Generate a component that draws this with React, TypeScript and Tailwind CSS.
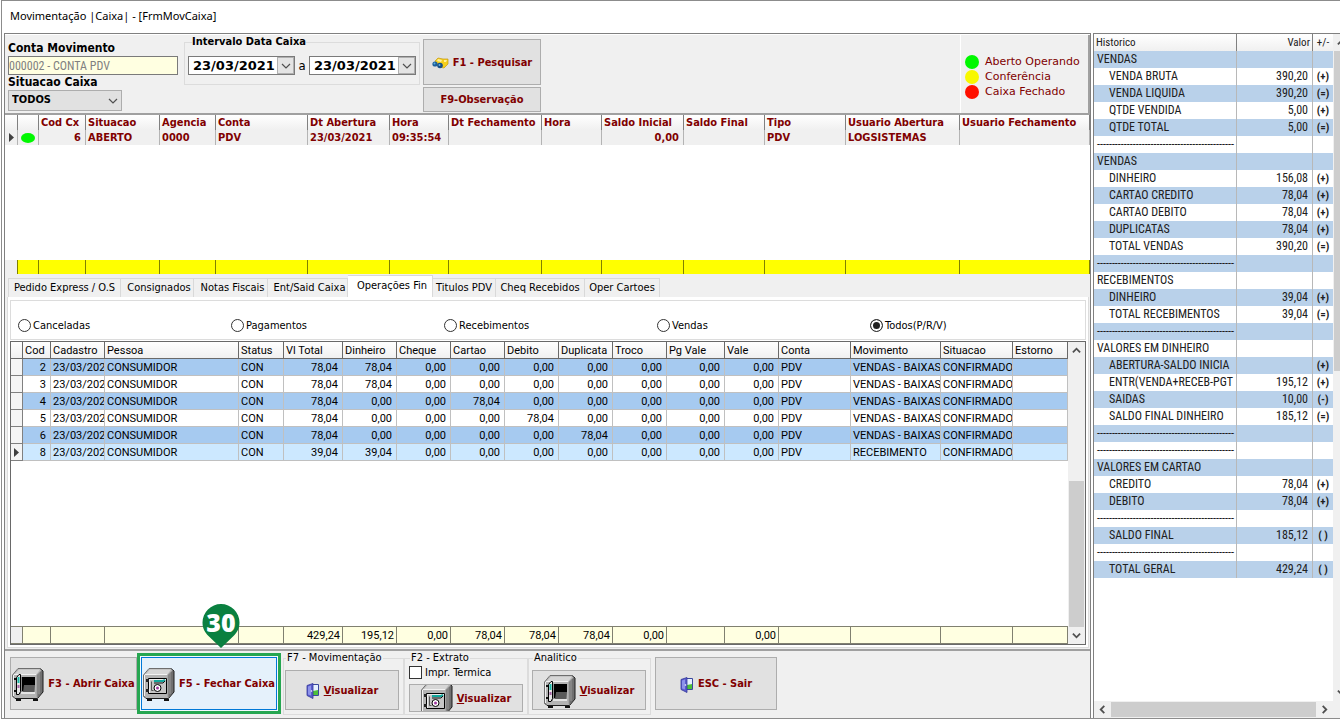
import { useState, type ReactNode } from 'react'

// ── Column widths (one column per grid is left free to stretch) ──
const CAIXA_COLS = [
  'w-[13px]', 'w-[21px]', 'w-[47px]', 'w-[74px]', 'w-[56px]', 'w-[92px]', 'w-[82px]', 'w-[59px]',
  'w-[93px]', 'w-[60px]', 'w-[82px]', 'w-[81px]', 'w-[81px]', 'w-[114px]', '',
]
const CAIXA_HEAD = [
  '', '', 'Cod Cx', 'Situacao', 'Agencia', 'Conta', 'Dt Abertura', 'Hora', 'Dt Fechamento', 'Hora',
  'Saldo Inicial', 'Saldo Final', 'Tipo', 'Usuario Abertura', 'Usuario Fechamento',
]
const CAIXA_ROW = [
  '6', 'ABERTO', '0000', 'PDV', '23/03/2021', '09:35:54', '', '', '0,00', '', 'PDV', 'LOGSISTEMAS', '',
]

const OPER_COLS = [
  'w-[12px]', 'w-[28px]', 'w-[54px]', '', 'w-[45px]', 'w-[59px]', 'w-[54px]', 'w-[54px]', 'w-[54px]',
  'w-[54px]', 'w-[54px]', 'w-[54px]', 'w-[58px]', 'w-[54px]', 'w-[72px]', 'w-[90px]', 'w-[72px]', 'w-[55px]',
]
const OPER_HEAD = [
  '', 'Cod', 'Cadastro', 'Pessoa', 'Status', 'Vl Total', 'Dinheiro', 'Cheque', 'Cartao', 'Debito',
  'Duplicata', 'Troco', 'Pg Vale', 'Vale', 'Conta', 'Movimento', 'Situacao', 'Estorno',
]

type Oper = { cod: string; total: string; valores: string[]; mov: string }
const OPERACOES: Oper[] = [
  { cod: '2', total: '78,04', valores: ['78,04', '0,00', '0,00', '0,00', '0,00'], mov: 'VENDAS - BAIXAS' },
  { cod: '3', total: '78,04', valores: ['78,04', '0,00', '0,00', '0,00', '0,00'], mov: 'VENDAS - BAIXAS' },
  { cod: '4', total: '78,04', valores: ['0,00', '0,00', '78,04', '0,00', '0,00'], mov: 'VENDAS - BAIXAS' },
  { cod: '5', total: '78,04', valores: ['0,00', '0,00', '0,00', '78,04', '0,00'], mov: 'VENDAS - BAIXAS' },
  { cod: '6', total: '78,04', valores: ['0,00', '0,00', '0,00', '0,00', '78,04'], mov: 'VENDAS - BAIXAS' },
  { cod: '8', total: '39,04', valores: ['39,04', '0,00', '0,00', '0,00', '0,00'], mov: 'RECEBIMENTO' },
]
const OPER_FOOT = [
  '', '', '', '', '', '429,24', '195,12', '0,00', '78,04', '78,04', '78,04', '0,00', '', '0,00', '', '', '', '',
]

const SEP = '-'.repeat(46)
// [historico, valor, sinal]
const HISTORICO: [string, string, string][] = [
  ['VENDAS', '', ''],
  ['VENDA BRUTA', '390,20', '(+)'],
  ['VENDA LIQUIDA', '390,20', '(=)'],
  ['QTDE VENDIDA', '5,00', '(+)'],
  ['QTDE TOTAL', '5,00', '(=)'],
  [SEP, '', ''],
  ['VENDAS', '', ''],
  ['DINHEIRO', '156,08', '(+)'],
  ['CARTAO CREDITO', '78,04', '(+)'],
  ['CARTAO DEBITO', '78,04', '(+)'],
  ['DUPLICATAS', '78,04', '(+)'],
  ['TOTAL VENDAS', '390,20', '(=)'],
  [SEP, '', ''],
  ['RECEBIMENTOS', '', ''],
  ['DINHEIRO', '39,04', '(+)'],
  ['TOTAL RECEBIMENTOS', '39,04', '(=)'],
  [SEP, '', ''],
  ['VALORES EM DINHEIRO', '', ''],
  ['ABERTURA-SALDO INICIA', '', '(+)'],
  ['ENTR(VENDA+RECEB-PGT', '195,12', '(+)'],
  ['SAIDAS', '10,00', '(-)'],
  ['SALDO FINAL DINHEIRO', '185,12', '(=)'],
  [SEP, '', ''],
  [SEP, '', ''],
  ['VALORES EM CARTAO', '', ''],
  ['CREDITO', '78,04', '(+)'],
  ['DEBITO', '78,04', '(+)'],
  [SEP, '', ''],
  ['SALDO FINAL', '185,12', '( )'],
  [SEP, '', ''],
  ['TOTAL GERAL', '429,24', '( )'],
]

const ABAS = [
  { nome: 'Pedido Express / O.S', cls: 'w-[113px]' },
  { nome: 'Consignados', cls: 'w-[73px] pl-1' },
  { nome: 'Notas Fiscais', cls: 'w-[74px] pl-1' },
  { nome: 'Ent/Said Caixa', cls: 'w-[80px] pl-1' },
  { nome: 'Operações Fin', cls: 'w-[85px] pl-1' },
  { nome: 'Titulos PDV', cls: 'w-[63px]' },
  { nome: 'Cheq Recebidos', cls: 'w-[89px]' },
  { nome: 'Oper Cartoes', cls: 'w-[75px]' },
]
const FILTROS = ['Canceladas', 'Pagamentos', 'Recebimentos', 'Vendas', 'Todos(P/R/V)']

// ── Icons ──
function Cofre({ aberto }: { aberto?: boolean }) {
  return (
    <svg width="32" height="33" viewBox="0 0 32 33" fill="none" aria-hidden="true" className="shrink-0">
      <path d="M1 7 6 1h22l3 2v21l-5 6H3l-2-2z" fill="#b4b4b4" />
      <path d="M2 7 7 1.500h21L24 7z" fill="#d6d6d6" />
      <path d="M25 7l5-5 1 2v20l-6 6z" fill="#707070" />
      <path d="M2 6.500h22M1.500 7v21" stroke="#f2f2f2" />
      <path d="M25 7v22M27 5v21" stroke="#9a9a9a" />
      <path d="M.5 28V7L6 .5h22" stroke="#6e6e6e" />
      <path d="M28 .5l3 2.500v21l-5.500 6.500H3L.5 28" stroke="#1c1c1c" />
      <path d="M4 31h5v2H4zM21 31h5v2h-5z" fill="#111" />
      {aberto ? (
        <>
          <path d="M8 9h15v17H8z" fill="#8c8c8c" />
          <path d="M12 9h11v8H12zM10 9h2v14h-2z" fill="#000" />
          <path d="M12 17h11l-1 7H11z" fill="#5a5a5a" />
          <path d="M9 24h14v2H9z" fill="#e4e4e4" />
          <path d="M4.500 9.500 7 6.500h1.500v17L7 26.500H4.500z" fill="#e6e6e6" stroke="#000" />
          <path d="M6.500 9v6" stroke="#19b8a6" strokeWidth="2" />
          <path d="M6.500 17v3" stroke="#a763a7" strokeWidth="2" />
          <path d="M2 10h2v2H2zM2 22h2v2H2z" fill="#111" />
        </>
      ) : (
        <>
          <path d="M5.500 10.500h18v15h-18z" fill="#c6c6c6" stroke="#000" />
          <path d="M6.500 25V11.500H23" stroke="#eee" />
          <path d="M8.500 13.500v9h2" stroke="#555" />
          <path d="M3 11h3v3H3zM3 21h3v3H3z" fill="#222" />
          <path d="M11 13h9l2-1" stroke="#12a79c" strokeWidth="2" />
          <path d="M11 15h9l2-2" stroke="#111" />
          <circle cx="14.500" cy="20" r="3.500" fill="#fff" stroke="#000" />
          <circle cx="14.500" cy="20" r="1.500" fill="#a03aa0" />
        </>
      )}
    </svg>
  )
}

function Porta() {
  return (
    <svg width="14" height="16" viewBox="0 0 14 16" aria-hidden="true" className="shrink-0">
      <path d="M6.500 1.500h6v11h-6z" fill="#e6f1ff" stroke="#3a479e" />
      <path d="M7 8l5-1v5H7z" fill="#4cc03a" />
      <path d="M1 2.500 7 .5v15l-6-3z" fill="#5a5ccc" stroke="#33379a" strokeWidth=".8" />
      <path d="M2 3.500l3-1v10l-3-1z" fill="#8d92ea" />
      <circle cx="5.500" cy="8" r=".8" fill="#fff" />
    </svg>
  )
}

function Binoculo() {
  return (
    <svg width="17" height="13" viewBox="0 0 17 13" aria-hidden="true" className="shrink-0">
      <path d="M3 4 6 1l5 1 5 0v5l-4 4-5-1z" fill="#f5cf1c" stroke="#c79a10" strokeWidth=".7" />
      <path d="M6 2l4 1-1 2-4-1zM12 3h3l-1 2h-2z" fill="#fff09a" />
      <circle cx="3" cy="7" r="2.600" fill="#1c5f9c" />
      <circle cx="8" cy="8.500" r="2.800" fill="#174f88" />
      <circle cx="2.500" cy="6.500" r="1" fill="#5fb0e0" />
      <circle cx="7.500" cy="8" r="1" fill="#5fb0e0" />
    </svg>
  )
}

function Seta({ d, size = 10 }: { d: string; size?: number }) {
  return (
    <svg width={size} height={size} viewBox="0 0 10 10" fill="none" aria-hidden="true" className="shrink-0">
      <path d={d} stroke="#505050" strokeWidth={size === 10 ? 1.2 : 2} />
    </svg>
  )
}
const CIMA = 'M1 7l4-4 4 4'
const BAIXO = 'M1 3l4 4 4-4'

function Marcador() {
  return (
    <svg width="5" height="9" viewBox="0 0 5 9" aria-hidden="true" className="mx-auto">
      <path d="M0 0l5 4.500L0 9z" fill="#404040" />
    </svg>
  )
}

// ── Shared pieces ──
function Cols({ cols }: { cols: string[] }) {
  return (
    <colgroup>
      {cols.map((c, i) => <col key={i} className={c} />)}
    </colgroup>
  )
}

function Botao({ className, children }: { className: string; children: ReactNode }) {
  return (
    <button
      type="button"
      className={`flex items-center justify-center overflow-hidden border border-[#adadad] bg-[#e1e1e1] pt-[2px] font-bold whitespace-nowrap text-[#800000] ${className}`}
    >
      {children}
    </button>
  )
}

function Data({ label }: { label: string }) {
  return (
    <div className="flex h-[19px] w-[107px] border border-[#7a7a7a] bg-white">
      <input
        aria-label={label}
        defaultValue="23/03/2021"
        className="w-[88px] pl-1 font-['DejaVu_Sans',sans-serif] text-[13px] font-bold outline-none"
      />
      <button type="button" aria-label={`Abrir ${label}`} className="flex w-[17px] items-center justify-center border border-[#b0b0b0] bg-[#e4e4e4]">
        <Seta d={BAIXO} />
      </button>
    </div>
  )
}

function Visualizar() {
  return <span><u>V</u>isualizar</span>
}

// ── Top: filters ──
function Filtros() {
  return (
    <section className="flex h-[81px] shrink-0 border-t border-b-2 border-t-white border-b-[#a0a0a0] bg-[#f0f0f0]">
      <div className="flex w-[179px] flex-col pt-[6px] pl-[3px] font-bold">
        <label htmlFor="conta" className="h-[15px] text-[12px] leading-[15px]">Conta Movimento</label>
        <input
          id="conta"
          defaultValue="000002 - CONTA PDV"
          className="h-[19px] w-[170px] border border-[#7a7a7a] bg-[#ffffe1] font-['Roboto_Condensed','Roboto',sans-serif] text-[12px] font-normal text-[#808080]"
        />
        <label htmlFor="situacao" className="h-[15px] text-[12px] leading-[15px]">Situacao Caixa</label>
        <div className="grid h-[21px] w-[114px] items-center border border-[#adadad] bg-[#e1e1e1]">
          <select id="situacao" className="col-start-1 row-start-1 appearance-none pl-[3px] text-[11px] outline-none">
            <option>TODOS</option>
          </select>
          <span className="pointer-events-none col-start-1 row-start-1 justify-self-end pr-[3px]"><Seta d={BAIXO} /></span>
        </div>
      </div>

      <fieldset className="h-[50px] w-[236px] border border-[#dcdcdc] px-[3px]">
        <legend className="ml-1 h-[14px] text-[11px] leading-[14px] font-bold">Intervalo Data Caixa</legend>
        <div className="flex items-center pt-[7px]">
          <Data label="Data inicial" />
          <span className="w-[14px] text-center text-[13px] leading-none">a</span>
          <Data label="Data final" />
        </div>
      </fieldset>

      <div className="flex flex-col gap-[2px] pt-1 pl-[3px]">
        <Botao className="h-[46px] w-[118px] gap-1 text-[11px]"><Binoculo />F1 - Pesquisar</Botao>
        <Botao className="h-[25px] w-[118px] text-[11px]">F9-Observação</Botao>
      </div>

      <ul className="ml-auto flex w-[130px] flex-col justify-center border-r-2 border-l border-r-[#a0a0a0] border-l-white pt-[5px] pl-1 font-['DejaVu_Sans',sans-serif] text-[11px] leading-[15px] whitespace-nowrap text-[#800000]">
        <li className="flex items-center gap-[6px]"><i className="size-[14px] rounded-full bg-[#00f800]" />Aberto Operando</li>
        <li className="flex items-center gap-[6px]"><i className="size-[14px] rounded-full bg-[#f8f800]" />Conferência</li>
        <li className="flex items-center gap-[6px]"><i className="size-[14px] rounded-full bg-[#ff1000]" />Caixa Fechado</li>
      </ul>
    </section>
  )
}

// ── Cash register list ──
function GradeCaixa() {
  const cel = 'h-[15px] truncate border-r px-[2px] text-clip'
  return (
    <section className="flex h-[159px] shrink-0 flex-col justify-between bg-white text-[11px] leading-[15px] text-[#800000]">
      <table className="w-full table-fixed border-separate border-spacing-0 font-bold">
        <Cols cols={CAIXA_COLS} />
        <thead>
          <tr className="bg-linear-to-b from-white to-[#f0f0f0] text-left">
            {CAIXA_HEAD.map((h, i) => <th key={i} className={`${cel} border-[#808080]`}>{h}</th>)}
          </tr>
        </thead>
        <tbody>
          <tr className="bg-[#f0f0f0]">
            <td className={`${cel} border-[#b4b4b4]`}><Marcador /></td>
            <td className={`${cel} border-[#b4b4b4]`}><i className="mx-auto block h-[10px] w-[14px] rounded-[50%] bg-[#00f800]" /></td>
            {CAIXA_ROW.map((v, i) => (
              <td key={i} className={`${cel} border-[#b4b4b4] ${i === 0 || i === 8 ? 'pr-1 text-right' : ''}`}>{v}</td>
            ))}
          </tr>
        </tbody>
      </table>
      <table className="w-full table-fixed border-separate border-spacing-0" aria-hidden="true">
        <Cols cols={CAIXA_COLS} />
        <tbody>
          <tr>
            {CAIXA_COLS.map((_, i) => (
              <td key={i} className={`h-[14px] border-r border-[#808000] ${i === 0 ? 'bg-[#f0f0f0]' : 'bg-[#ffff00]'}`} />
            ))}
          </tr>
        </tbody>
      </table>
    </section>
  )
}

// ── Tabs ──
function Abas() {
  const [ativa, setAtiva] = useState(4)
  return (
    <div role="tablist" className="flex h-[23px] shrink-0 items-end bg-[#f0f0f0] pl-[3px] text-[11px]">
      {ABAS.map((a, i) => (
        <button
          key={a.nome}
          type="button"
          role="tab"
          aria-selected={i === ativa}
          onClick={() => setAtiva(i)}
          className={`border-t border-r border-[#d9d9d9] whitespace-nowrap ${i === 0 ? 'border-l' : ''} ${i === ativa ? 'h-[22px] bg-white' : 'h-[19px] bg-[#f0f0f0]'} ${a.cls}`}
        >
          {a.nome}
        </button>
      ))}
    </div>
  )
}

// ── Operations grid ──
function GradeOperacoes() {
  const cel = 'h-[17px] overflow-hidden whitespace-nowrap border-r border-b border-[#c0c0c0]'
  const txt = `${cel} pl-[2px]`
  const num = `${cel} pr-1 text-right`
  return (
    <div className="mt-px flex min-h-[200px] flex-1 border border-[#696969] bg-white font-['Roboto',sans-serif] text-[11px] leading-[15px]">
      <div className="flex min-w-0 flex-1 flex-col justify-between">
        <table className="w-full table-fixed border-separate border-spacing-0">
          <Cols cols={OPER_COLS} />
          <thead>
            <tr className="bg-linear-to-b from-white to-[#efefef] text-left">
              {OPER_HEAD.map((h, i) => (
                <th key={i} className="h-[17px] overflow-hidden border-r border-b border-[#696969] pl-[2px] font-normal whitespace-nowrap">{h}</th>
              ))}
            </tr>
          </thead>
          <tbody>
            {OPERACOES.map((o, i) => (
              <tr key={o.cod} className={i === 5 ? 'bg-[#cce8ff]' : i % 2 === 0 ? 'bg-[#a6caf0]' : 'bg-white'}>
                <td className="h-[17px] border-r border-b border-[#808080] bg-[#f5f5f5] p-0">{i === 5 && <Marcador />}</td>
                <td className={num}>{o.cod}</td>
                <td className={txt}>23/03/2021</td>
                <td className={txt}>CONSUMIDOR</td>
                <td className={txt}>CON</td>
                <td className={num}>{o.total}</td>
                {o.valores.map((v, j) => <td key={j} className={num}>{v}</td>)}
                <td className={num}>0,00</td>
                <td className={num}>0,00</td>
                <td className={num}>0,00</td>
                <td className={txt}>PDV</td>
                <td className={txt}>{o.mov}</td>
                <td className={txt}>CONFIRMADO</td>
                <td className={txt} />
              </tr>
            ))}
          </tbody>
        </table>
        <table className="w-full table-fixed border-separate border-spacing-0">
          <Cols cols={OPER_COLS} />
          <tbody>
            <tr>
              {OPER_FOOT.map((v, i) => (
                <td key={i} className={`h-[18px] border-t border-r border-b border-[#808070] pr-[2px] text-right ${i === 0 ? 'bg-[#f0f0f0]' : 'bg-[#ffffe1]'}`}>{v}</td>
              ))}
            </tr>
          </tbody>
        </table>
      </div>
      <div className="flex w-[17px] flex-col items-center bg-[#f0f0f0]">
        <span className="flex h-[17px] items-center"><Seta d={CIMA} size={9} /></span>
        <span className="mt-auto h-[146px] w-[15px] bg-[#cdcdcd]" />
        <span className="flex h-[17px] items-center"><Seta d={BAIXO} size={9} /></span>
      </div>
    </div>
  )
}

function PainelOperacoes() {
  const [filtro, setFiltro] = useState('Todos(P/R/V)')
  return (
    <section className="flex min-h-0 flex-1 flex-col border-b-2 border-[#a0a0a0] bg-[#f0f0f0] pr-px pl-[2px]">
      <div className="mb-px flex flex-1 flex-col border border-t-0 border-[#dcdcdc] bg-white px-[2px] pt-[3px] pb-[2px]">
        <fieldset className="h-[40px] shrink-0 border border-[#dcdcdc] pt-[17px] pr-[2px] pl-[7px] text-[11px] leading-[15px]">
          <div className="grid grid-cols-5">
            {FILTROS.map((f) => (
              <label key={f} className="flex items-center gap-[2px]">
                <input
                  type="radio"
                  name="filtro"
                  checked={filtro === f}
                  onChange={() => setFiltro(f)}
                  className="size-[13px] appearance-none rounded-full border border-[#333] bg-white checked:bg-[#222] checked:shadow-[inset_0_0_0_2px_#fff]"
                />
                {f}
              </label>
            ))}
          </div>
        </fieldset>
        <GradeOperacoes />
      </div>
    </section>
  )
}

// ── Bottom: actions ──
function Acoes() {
  const grupo = 'h-[64px] border border-[#dcdcdc]'
  const titulo = 'h-[14px] px-[1px] text-[11px] leading-[14px]'
  return (
    <footer className="flex h-[67px] shrink-0 items-start bg-[#f0f0f0] pl-[5px] text-[11px]">
      <Botao className="mt-[6px] h-[53px] w-[127px] gap-1"><Cofre aberto />F3 - Abrir Caixa</Botao>

      <div className="relative mt-[2px] flex h-[61px] w-[144px] border-[3px] border-[#26a651] bg-[#f5faff] p-px">
        <button
          type="button"
          className="flex flex-1 items-center justify-center gap-1 border border-[#0078d7] bg-[#e5f1fb] pt-[2px] font-bold whitespace-nowrap text-[#800000]"
        >
          <Cofre />F5 - Fechar Caixa
        </button>
        {/* Step pin */}
        <div className="absolute -top-[52px] left-[62px] grid w-[38px] place-items-center">
          <svg width="38" height="44" viewBox="0 0 38 44" aria-hidden="true" className="col-start-1 row-start-1">
            <path d="M19 0a18.500 18.500 0 0 1 18.500 18.500c0 6-2.500 10-6 13.500L19 44 6.500 32C3 28.500.5 24.500.5 18.500A18.500 18.500 0 0 1 19 0z" fill="#0a8040" />
          </svg>
          <span className="col-start-1 row-start-1 pb-2 font-['Open_Sans',sans-serif] text-[25px] leading-none font-extrabold text-white">30</span>
        </div>
      </div>

      <fieldset className={`ml-[2px] w-[121px] px-px ${grupo}`}>
        <legend className={`ml-px ${titulo}`}>F7 - Movimentação</legend>
        <div className="pt-[5px]">
          <Botao className="h-[40px] w-[114px] gap-1"><Porta /><Visualizar /></Botao>
        </div>
      </fieldset>
      <fieldset className={`w-[123px] px-1 ${grupo}`}>
        <legend className={`ml-px ${titulo}`}>F2 - Extrato</legend>
        <label className="mt-px flex h-[18px] items-start gap-[3px] leading-[14px]">
          <input type="checkbox" className="size-[13px] appearance-none border border-[#333] bg-white" />
          Impr. Termica
        </label>
        <Botao className="h-[28px] w-[114px] gap-1"><Cofre /><Visualizar /></Botao>
      </fieldset>
      <fieldset className={`w-[123px] px-[3px] ${grupo}`}>
        <legend className={`ml-px ${titulo}`}>Analitico</legend>
        <div className="pt-[5px]">
          <Botao className="h-[40px] w-[114px] gap-1"><Cofre aberto /><Visualizar /></Botao>
        </div>
      </fieldset>

      <Botao className="mt-[6px] ml-1 h-[53px] w-[122px] gap-1"><Porta />ESC - Sair</Botao>
    </footer>
  )
}

// ── Right: summary ──
function Resumo() {
  const cab = 'h-[17px] border-r border-[#808080] font-normal'
  const cel = 'h-[17px] border-r border-[#b8b8b8]'
  return (
    <aside className="flex w-[247px] shrink-0 overflow-hidden border-t border-l border-[#808080] bg-white font-['Roboto_Condensed','Roboto',sans-serif]">
      <div className="flex min-w-0 flex-1 flex-col">
        <table className="w-full table-fixed border-separate border-spacing-0 text-[12px] leading-[17px] text-[#202020]">
          <colgroup>
            <col />
            <col className="w-[76px]" />
            <col className="w-[20px]" />
          </colgroup>
          <thead>
            <tr className="bg-linear-to-b from-white to-[#f0f0f0] text-[11px]">
              <th className={`${cab} pl-[2px] text-left`}>Historico</th>
              <th className={`${cab} pr-[2px] text-right`}>Valor</th>
              <th className="text-center font-normal">+/-</th>
            </tr>
          </thead>
          <tbody>
            {HISTORICO.map(([nome, valor, sinal], i) => (
              <tr key={i} className={i % 2 === 0 ? 'bg-[#b9d1ea]' : 'bg-white'}>
                <td className={`${cel} overflow-hidden whitespace-nowrap ${sinal ? 'pl-[15px]' : 'pl-[3px]'}`}>{nome}</td>
                <td className={`${cel} pr-1 text-right`}>{valor}</td>
                <td className="text-center text-[11px] font-bold">{sinal}</td>
              </tr>
            ))}
          </tbody>
        </table>
        <div className="mt-auto flex h-[17px] items-center justify-between bg-[#f0f0f0] px-1">
          <Seta d="M7 1L3 5l4 4" size={9} />
          <span className="mx-1 h-[15px] flex-1 bg-[#cdcdcd]" />
          <Seta d="M3 1l4 4-4 4" size={9} />
        </div>
      </div>
      <div className="flex w-[7px] flex-col overflow-hidden bg-[#f0f0f0] pl-px">
        <span className="flex h-[17px] items-center pl-[3px]"><Seta d={CIMA} size={9} /></span>
        <span className="h-[320px] bg-[#cdcdcd]" />
        <span className="mt-auto mb-[17px] flex h-[17px] items-center pl-[3px]"><Seta d={BAIXO} size={9} /></span>
      </div>
    </aside>
  )
}

export default function App() {
  return (
    <div className="flex h-screen min-h-[640px] flex-col bg-white pb-px pl-px font-['DejaVu_Sans_Condensed','DejaVu_Sans',sans-serif] text-black">
      <div className="flex min-h-0 flex-1 flex-col border-t border-b border-l border-[#8c8c8c] pl-[2px]">
        <h1 className="h-[32px] shrink-0 pl-[6px] font-['Noto_Sans',sans-serif] text-[11px] leading-[30px]">
          Movimentação |Caixa| - [FrmMovCaixa]
        </h1>
        <div className="flex min-h-0 flex-1">
          <main className="mr-[2px] flex min-w-0 flex-1 flex-col border-t border-r border-l border-[#808080]">
            <Filtros />
            <GradeCaixa />
            <Abas />
            <PainelOperacoes />
            <Acoes />
          </main>
          <Resumo />
        </div>
      </div>
    </div>
  )
}
